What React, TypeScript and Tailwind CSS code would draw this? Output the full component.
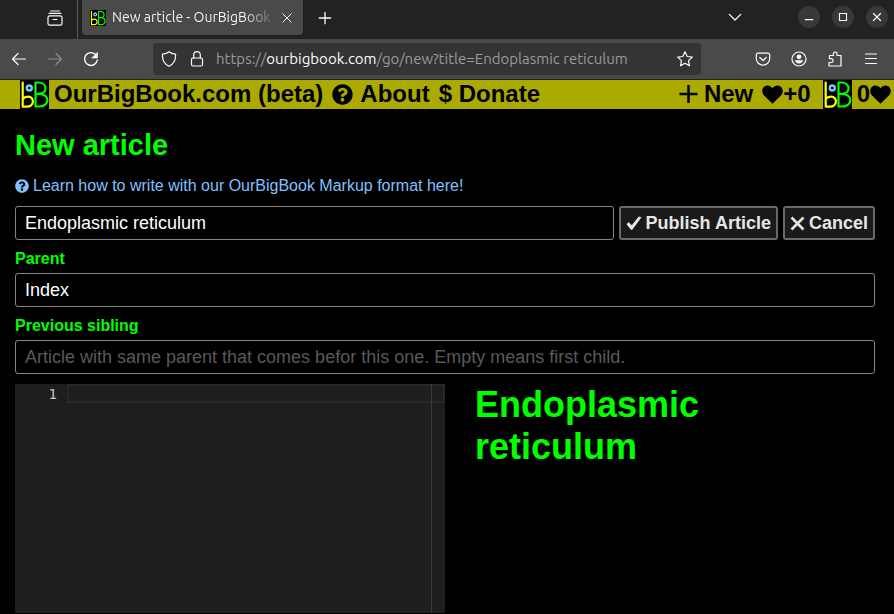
import React, { useState } from "react";
import { FaQuestionCircle } from "react-icons/fa";

function Logo({ className }: { className: string }) {
  return (
    <svg viewBox="0 0 29 29" className={className} fill="none" aria-hidden="true">
      <rect width="29" height="29" fill="#000" />
      <g strokeWidth="2.200" strokeLinecap="round" strokeLinejoin="round">
        <path d="M2.700 2.500V26.700H7C14.500 26.700 15 16.700 8 16.700C5.500 16.700 4 17.500 2.700 19" stroke="#ff0" />
        <circle cx="9.300" cy="8" r="2.500" stroke="#80c0ff" strokeWidth="2.400" />
        <path
          d="M15.500 2.500V26.500H18.500C30.500 26.500 30 14 19 14H16M19 14C28 13.500 27.500 2.500 18.500 2.500H15.500"
          stroke="#0f0"
        />
      </g>
    </svg>
  );
}

function Heart() {
  return (
    <svg viewBox="0 0 21 19" className="h-[19px] w-[21px]" fill="currentColor" aria-hidden="true">
      <path d="M10.500 18.800L1.800 10.200C-.8 7.200.1 3.200 2.400 1.500C5.200-.3 8.500.7 10.500 3.300C12.500.7 15.800-.3 18.600 1.500C20.900 3.200 21.800 7.200 19.200 10.200Z" />
    </svg>
  );
}

function Glyph({ children, className = "size-4" }: { children: React.ReactNode; className?: string }) {
  return (
    <svg
      viewBox="0 0 16 16"
      className={className}
      fill="none"
      stroke="currentColor"
      strokeWidth="1.2"
      strokeLinecap="round"
      strokeLinejoin="round"
      aria-hidden="true"
    >
      {children}
    </svg>
  );
}

function TabStrip() {
  return (
    <div className="flex h-[39px] items-center bg-[#222222]">
      <div className="flex h-full w-[78px] items-center justify-end border-r border-[#5a5a5a] pr-[14px] pb-1">
        <button type="button" aria-label="Recent browsing">
          <Glyph className="size-4">
            <path d="M3.500 1h9M2 3.300h12" />
            <rect x="1" y="5.800" width="14" height="9.400" rx="1.800" />
            <path d="M6 9.500h4" />
          </Glyph>
        </button>
      </div>
      <div className="ml-1 flex h-[35px] w-[221px] items-center self-start rounded-b-sm bg-[#4a4a4a] pr-[10px] pl-2">
        <Logo className="size-4 shrink-0" />
        <span className="ml-[6px] min-w-0 flex-1 overflow-hidden whitespace-nowrap bg-linear-to-r from-[#fbfbfe] from-80% to-[#4a4a4a] bg-clip-text text-[14px] text-transparent">
          New article - OurBigBook
        </span>
        <button type="button" aria-label="Close tab" className="ml-1">
          <Glyph className="size-3">
            <path d="M2.500 2.500l11 11M13.500 2.500l-11 11" strokeWidth="1.300" />
          </Glyph>
        </button>
      </div>
      <button type="button" aria-label="New tab" className="ml-[15px] pb-1">
        <Glyph className="size-[14px]">
          <path d="M8 1.500v13M1.500 8h13" strokeWidth="1.500" />
        </Glyph>
      </button>
      <div className="ml-auto flex items-center gap-3 pr-[6px] pb-[5px]">
        <button type="button" aria-label="List all tabs" className="mr-[44px]">
          <Glyph className="size-[14px]">
            <path d="M1.500 5l6.500 6.500L14.500 5" strokeWidth="1.500" />
          </Glyph>
        </button>
        <button type="button" aria-label="Minimize" className="flex size-[22px] items-center justify-center rounded-full bg-[#383838]">
          <Glyph className="size-3">
            <path d="M3 11.500h10" strokeWidth="1.500" />
          </Glyph>
        </button>
        <button type="button" aria-label="Maximize" className="flex size-[22px] items-center justify-center rounded-full bg-[#383838]">
          <Glyph className="size-3">
            <path d="M3.300 3.300h9.400v9.400H3.300z" strokeWidth="1.500" strokeLinejoin="miter" />
          </Glyph>
        </button>
        <button type="button" aria-label="Close window" className="flex size-[22px] items-center justify-center rounded-full bg-[#383838]">
          <Glyph className="size-3">
            <path d="M3.300 3.300l9.400 9.400M12.700 3.300l-9.400 9.400" strokeWidth="1.600" />
          </Glyph>
        </button>
      </div>
    </div>
  );
}

function Toolbar() {
  return (
    <div className="flex h-[41px] items-center border-b border-[#222222] bg-[#4a4a4a] pr-[15px] pl-[11px]">
      <div className="flex items-center gap-5">
        <button type="button" aria-label="Back">
          <Glyph>
            <path d="M1.500 8h13M7 2.500L1.500 8L7 13.500" />
          </Glyph>
        </button>
        <button type="button" aria-label="Forward" disabled className="text-[#8c8c8c]">
          <Glyph>
            <path d="M1.500 8h13M9 2.500L14.500 8L9 13.500" />
          </Glyph>
        </button>
        <button type="button" aria-label="Reload">
          <Glyph>
            <path d="M14.300 9A6.400 6.400 0 1 1 12.300 3.300" strokeWidth="1.400" />
            <path d="M14.500 1.500v5.500H9z" fill="currentColor" strokeWidth="0.600" />
          </Glyph>
        </button>
      </div>
      <div className="ml-[54px] flex h-8 w-[548px] items-center rounded bg-[#343434] px-2">
        <button type="button" aria-label="Tracking protection">
          <Glyph>
            <path d="M8 .8C9.500 2.200 12 3 14.500 3.200C15 9 12.500 13.300 8 15.300C3.500 13.300 1 9 1.500 3.200C4 3 6.500 2.200 8 .8z" />
          </Glyph>
        </button>
        <button type="button" aria-label="Connection security" className="ml-3">
          <Glyph>
            <rect x="2.500" y="7" width="11" height="8" rx="1.500" />
            <path d="M4.700 7V4a3.300 3.300 0 0 1 6.600 0v3" />
          </Glyph>
        </button>
        <span className="ml-[11px] flex-1 whitespace-pre text-[15px] text-[#9a9a9a]">
          https://<span className="text-[#fbfbfe]">ourbigbook.com</span>/go/new?title=Endoplasmic reticulum
        </span>
        <button type="button" aria-label="Bookmark this page">
          <Glyph>
            <path d="M8 .8l2.200 4.700 5.100.600-3.800 3.500 1 5.200L8 12.200l-4.500 2.600 1-5.200L.700 6.100l5.100-.600z" />
          </Glyph>
        </button>
      </div>
      <div className="ml-auto flex items-center gap-5">
        <button type="button" aria-label="Save to Pocket">
          <Glyph>
            <path d="M3 2.200h10a1.700 1.700 0 0 1 1.700 1.700V7.500a6.700 6.700 0 0 1-13.400 0V3.900A1.700 1.700 0 0 1 3 2.200z" />
            <path d="M4.800 6.500L8 9.500l3.200-3" />
          </Glyph>
        </button>
        <button type="button" aria-label="Account">
          <Glyph>
            <circle cx="8" cy="8" r="7" />
            <circle cx="8" cy="5.800" r="2.400" fill="currentColor" stroke="none" />
            <path d="M3.800 9.300h8.400a4.400 4.400 0 0 1-8.400 0z" fill="currentColor" stroke="none" />
          </Glyph>
        </button>
        <button type="button" aria-label="Extensions">
          <Glyph>
            <path d="M2 15h12V4.500H10V2.800a1.800 1.800 0 0 0-3.600 0v1.700H2.500v3.200h1.700a1.800 1.800 0 0 1 0 3.800H2z" />
          </Glyph>
        </button>
        <button type="button" aria-label="Open application menu">
          <Glyph>
            <path d="M2.500 3h11M2.500 7.500h11M2.500 12.500h11" />
          </Glyph>
        </button>
      </div>
    </div>
  );
}

function SiteNav() {
  return (
    <nav className="flex h-[29px] items-center justify-between bg-[#aaaa00] pr-[3px] pl-5 text-[24px] font-bold whitespace-nowrap text-black">
      <div className="flex items-center gap-[9px]">
        <a href="#home" className="flex items-center gap-[5px]">
          <Logo className="size-[29px]" />
          <span className="pb-px leading-[26px]">OurBigBook.com (beta)</span>
        </a>
        <a href="#about" className="flex items-center gap-[7px]">
          <FaQuestionCircle className="size-[21px]" />
          <span className="pb-px leading-[26px]">About</span>
        </a>
        <a href="#donate" className="pb-px leading-[26px]">
          $ Donate
        </a>
      </div>
      <div className="flex items-center">
        <a href="#new" className="flex items-center gap-[5px]">
          <svg viewBox="0 0 21 21" className="size-[21px]" stroke="currentColor" strokeWidth="2.500" aria-hidden="true">
            <path d="M10.500 1v18M1.500 10h18" />
          </svg>
          <span className="pb-px leading-[26px]">New</span>
        </a>
        <a href="#likes" className="ml-[9px] flex items-center">
          <Heart />
          <span className="pb-px leading-[26px]">+0</span>
        </a>
        <a href="#user" className="ml-3 flex items-center gap-[5px]">
          <Logo className="size-[29px]" />
          <span className="flex items-center">
            <span className="pb-px leading-[26px]">0</span>
            <Heart />
          </span>
        </a>
      </div>
    </nav>
  );
}

const field =
  "h-[34px] w-full min-w-0 rounded-[3px] border border-[#858585] bg-black px-[9px] text-[18px] text-white outline-none placeholder:text-[#595959]";
const label = "pt-2 pb-1 text-[16px] leading-[21px] font-bold text-[#00ff00]";
const action =
  "flex h-[34px] shrink-0 items-center gap-1 rounded-[3px] border-2 border-[#696969] bg-[#1a1a1a] px-[5px] text-[18px] font-bold text-[#e6e6e6]";

function ArticleForm() {
  const [title, setTitle] = useState("Endoplasmic reticulum");
  const [parent, setParent] = useState("Index");
  const [sibling, setSibling] = useState("");
  const [body, setBody] = useState("");

  return (
    <form className="flex flex-1 flex-col" onSubmit={(e) => e.preventDefault()}>
      <div className="flex gap-[5px]">
        <input aria-label="Title" className={field} value={title} onChange={(e) => setTitle(e.target.value)} />
        <button type="submit" className={action}>
          <svg viewBox="0 0 16 16" className="size-4" fill="currentColor" aria-hidden="true">
            <path d="M.5 9.200L2.700 7.200L5.800 10.200L12.800 1.500L15.500 2.300L6.300 14.800L5 14.800Z" />
          </svg>
          Publish Article
        </button>
        <button type="button" className={action}>
          <svg viewBox="0 0 15 15" className="size-[15px]" stroke="currentColor" strokeWidth="2.600" aria-hidden="true">
            <path d="M1.500 1.500l12 12M13.500 1.500l-12 12" />
          </svg>
          Cancel
        </button>
      </div>
      <label htmlFor="parent" className={label}>
        Parent
      </label>
      <input id="parent" className={`${field} pt-px`} value={parent} onChange={(e) => setParent(e.target.value)} />
      <label htmlFor="sibling" className={label}>
        Previous sibling
      </label>
      <input
        id="sibling"
        className={`${field} pt-px`}
        placeholder="Article with same parent that comes befor this one. Empty means first child."
        value={sibling}
        onChange={(e) => setSibling(e.target.value)}
      />
      <div className="mt-[10px] grid flex-1 grid-cols-2">
        <div className="flex bg-[#1e1e1e] font-['DejaVu_Sans_Mono','Liberation_Mono',monospace] text-[14px] leading-5">
          <div className="w-[52px] shrink-0 pr-[10px] text-right text-[#c6c6c6]">1</div>
          <div className="relative flex-1">
            <div className="absolute inset-x-0 top-0 h-[19px] border-2 border-[#282828]" />
            <div className="absolute inset-y-0 right-[13px] w-px bg-[#3a3a3a]" />
            <textarea
              aria-label="Article body"
              className="relative block size-full resize-none bg-transparent text-[#d4d4d4] outline-none"
              value={body}
              onChange={(e) => setBody(e.target.value)}
            />
          </div>
        </div>
        <h2 className="pr-[15px] pl-[30px] text-[36px] leading-[42px] font-bold text-[#00ff00]">{title}</h2>
      </div>
    </form>
  );
}

export default function App() {
  return (
    <div className="flex min-h-screen flex-col bg-black font-['Liberation_Sans',Arial,sans-serif]">
      <header className="font-['Ubuntu','Noto_Sans',sans-serif] text-[#fbfbfe]">
        <TabStrip />
        <Toolbar />
      </header>
      <SiteNav />
      <main className="flex flex-1 flex-col pt-5 pr-[19px] pb-px pl-[15px]">
        <h1 className="text-[29px] leading-8 font-bold text-[#00ff00]">New article</h1>
        <a href="#markup" className="mt-[15px] mb-[10px] flex items-center gap-1 self-start text-[16px] leading-5 text-[#80c0ff]">
          <FaQuestionCircle className="size-[14px]" />
          Learn how to write with our OurBigBook Markup format here!
        </a>
        <ArticleForm />
      </main>
    </div>
  );
}
